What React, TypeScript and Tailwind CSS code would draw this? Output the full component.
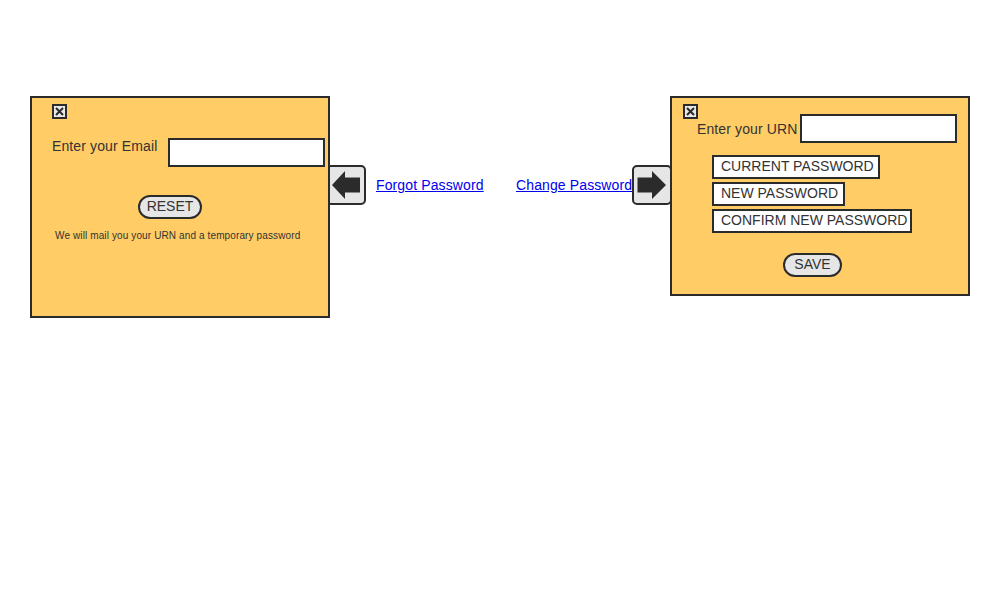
import React from "react";

const font = { fontFamily: '"Liberation Sans", Arial, sans-serif' };

function CloseBox({ className }: { className: string }) {
  return (
    <div className={`absolute w-[15px] h-[15px] border-2 border-[#2b2b2b] bg-[#e8e8e8] ${className}`}>
      <svg width="11" height="11" viewBox="0 0 11 11" className="block">
        <path d="M2 2 L9 9 M9 2 L2 9" stroke="#2b2b2b" strokeWidth="2" />
      </svg>
    </div>
  );
}

function ArrowButton({ dir }: { dir: "left" | "right" }) {
  return (
    <div className="w-[40px] h-[40px] shrink-0 border-2 border-[#2b2b2b] bg-[#e6e6e6] rounded-[5px]">
      <svg width="36" height="36" viewBox="0 0 36 36" className="block">
        {dir === "left" ? (
          <path d="M4 18 L17 4 L17 10.5 L32 10.5 L32 25.5 L17 25.5 L17 32 Z" fill="#2b2b2b" />
        ) : (
          <path d="M32 18 L18 4 L18 10.5 L3.5 10.5 L3.5 25.5 L18 25.5 L18 32 Z" fill="#2b2b2b" />
        )}
      </svg>
    </div>
  );
}

function PwBox({ label, w }: { label: string; w: string }) {
  return (
    <div className={`${w} h-[24px] border-2 border-[#2b2b2b] bg-white px-[7px] pt-px text-[14px] leading-[16px] text-[#333] whitespace-nowrap`}>
      {label}
    </div>
  );
}

export default function App() {
  return (
    <div className="min-h-[603px] w-full bg-white" style={font}>
      <div className="flex items-start pt-[96px] pl-[30px]">
        {/* forgot password panel */}
        <div className="relative z-10 w-[300px] h-[222px] shrink-0 border-2 border-[#2b2b2b] bg-[#ffcc66] pt-[40px]">
          <CloseBox className="left-[20px] top-[6px]" />
          <div className="flex items-start ml-[20px]">
            <span className="w-[116px] text-[14px] leading-[16px] tracking-[0.12px] text-[#333]">Enter your Email</span>
            <div className="w-[157px] h-[29px] border-2 border-[#2b2b2b] bg-white" />
          </div>
          <button className="ml-[106px] mt-[28px] w-[64px] h-[24px] rounded-full border-2 border-[#2b2b2b] bg-[#e6e6e6] text-[14px] leading-[16px] text-[#333] flex justify-center pt-px">
            RESET
          </button>
          <p className="ml-[23px] mt-[11px] text-[10px] leading-[12px] tracking-[0.12px] text-[#333]">
            We will mail you your URN and a temporary password
          </p>
        </div>

        <div className="flex items-center h-[40px] mt-[69px] -ml-[4px]">
          <ArrowButton dir="left" />
          <div className="w-[150px] pl-[10px] text-[14px] tracking-[0.12px]">
            <a href="#" className="text-[#0000ee] underline">Forgot Password</a>
          </div>
          <div className="w-[116px] text-[14px] tracking-[0.12px] whitespace-nowrap">
            <a href="#" className="text-[#0000ee] underline">Change Password</a>
          </div>
          <ArrowButton dir="right" />
        </div>

        {/* change password panel */}
        <div className="relative z-10 -ml-[2px] w-[300px] h-[200px] shrink-0 border-2 border-[#2b2b2b] bg-[#ffcc66] pt-[16px]">
          <CloseBox className="left-[11px] top-[6px]" />
          <div className="flex items-center ml-[25px]">
            <span className="w-[103px] text-[14px] leading-[16px] tracking-[0.12px] text-[#333]">Enter your URN</span>
            <div className="w-[157px] h-[29px] border-2 border-[#2b2b2b] bg-white" />
          </div>
          <div className="flex flex-col items-start gap-[3px] ml-[40px] mt-[12px]">
            <PwBox label="CURRENT PASSWORD" w="w-[168px]" />
            <PwBox label="NEW PASSWORD" w="w-[133px]" />
            <PwBox label="CONFIRM NEW PASSWORD" w="w-[200px]" />
          </div>
          <button className="ml-[111px] mt-[20px] w-[59px] h-[24px] rounded-full border-2 border-[#2b2b2b] bg-[#e6e6e6] text-[14px] leading-[16px] text-[#333] flex justify-center pt-px">
            SAVE
          </button>
        </div>
      </div>
    </div>
  );
}
